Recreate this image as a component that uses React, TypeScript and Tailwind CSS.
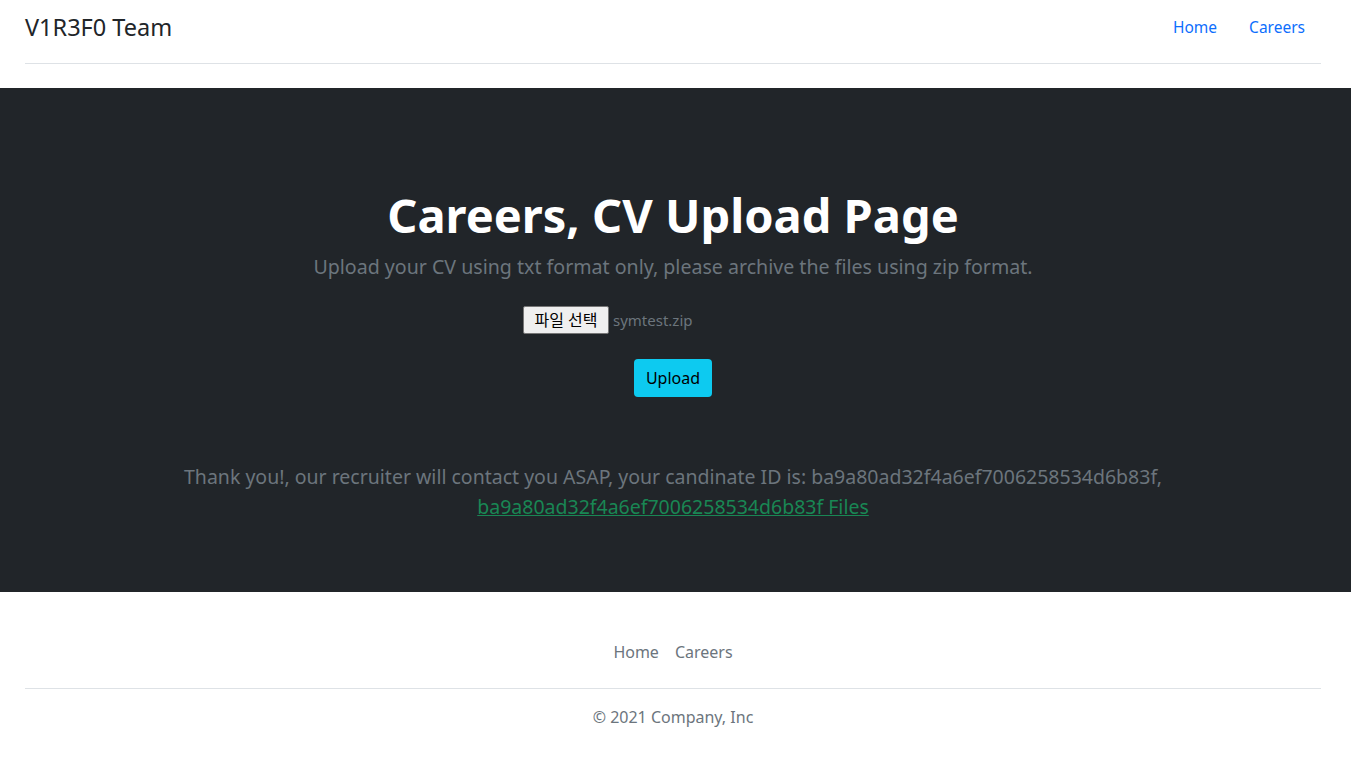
export default function App() {
  const font = { fontFamily: '"Noto Sans", "Noto Sans CJK KR", sans-serif' };

  return (
    <div className="min-h-screen bg-white text-[#212529]" style={font}>
      <div className="pl-[25px] pr-[30px]">
        <header className="flex items-center pt-[7px] pb-4 mb-6 border-b border-[#dee2e6]">
          <a href="#" className="text-[23.5px] leading-[36px] text-[#212529] mr-auto">
            V1R3F0 Team
          </a>
          <ul className="flex">
            <li>
              <a href="#" className="block px-4 py-2 text-[15.5px] leading-6 text-[#0d6efd]">
                Home
              </a>
            </li>
            <li>
              <a href="#" className="block px-4 py-2 text-[15.5px] leading-6 text-[#0d6efd]">
                Careers
              </a>
            </li>
          </ul>
        </header>
      </div>

      <section className="bg-[#212529] text-center pt-[98px] pb-[70px] pr-[5px]">
        <h1 className="text-[47px] leading-[58px] font-bold text-white mb-2">
          Careers, CV Upload Page
        </h1>
        <p className="text-[19.6px] leading-[30px] text-[#6c757d] mb-6">
          Upload your CV using txt format only, please archive the files using zip format.
        </p>
        <form className="w-[300px] mx-auto" onSubmit={(e) => e.preventDefault()}>
          <div className="flex items-center text-left">
            <span className="h-[28px] w-[86px] flex items-center justify-center bg-[#efefef] border border-[#767676] rounded-[2px] text-[16px] text-black">
              파일 선택
            </span>
            <span className="ml-[4px] text-[15px] text-[#6c757d]">symtest.zip</span>
          </div>
          <button
            type="submit"
            className="mt-[25px] h-[38px] px-3 rounded-[4px] bg-[#0dcaf0] text-[16px] text-black"
          >
            Upload
          </button>
        </form>
        <p className="mt-[65px] text-[19.5px] leading-[30px] text-[#6c757d]">
          Thank you!, our recruiter will contact you ASAP, your candinate ID is: ba9a80ad32f4a6ef7006258534d6b83f,
          <br />
          <a href="#" className="text-[#198754] underline">
            ba9a80ad32f4a6ef7006258534d6b83f Files
          </a>
        </p>
      </section>

      <div className="pl-[25px] pr-[30px]">
        <footer className="py-4 my-6">
          <ul className="flex justify-center pb-4 mb-4 border-b border-[#dee2e6]">
            <li>
              <a href="#" className="block px-2 py-2 text-[16px] leading-6 text-[#6c757d]">
                Home
              </a>
            </li>
            <li>
              <a href="#" className="block px-2 py-2 text-[16px] leading-6 text-[#6c757d]">
                Careers
              </a>
            </li>
          </ul>
          <p className="text-center text-[16px] leading-6 text-[#6c757d]">© 2021 Company, Inc</p>
        </footer>
      </div>
    </div>
  );
}
